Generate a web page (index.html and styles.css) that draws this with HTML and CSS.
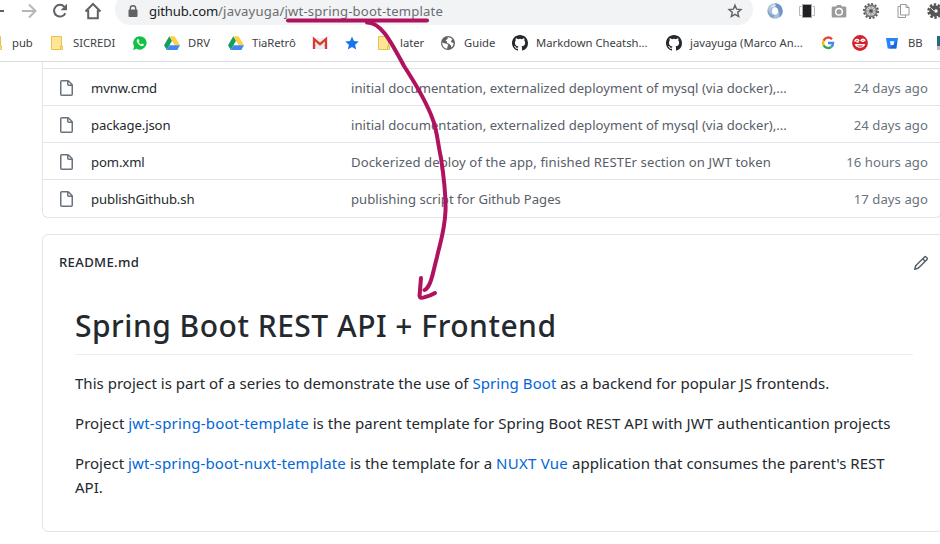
FILE: index.html
```
<!DOCTYPE html>
<html lang="en">
<head>
<meta charset="utf-8">
<title>javayuga/jwt-spring-boot-template</title>
<link rel="stylesheet" href="styles.css">
</head>
<body>
<svg width="0" height="0" class="defs">
  <symbol id="folder" viewBox="0 0 16 16"><path d="M2.5 1.5h10v10h1v3h-11z" fill="#ffe596" stroke="#e8c34b"/><path d="M11.5 14v-3h2" fill="none" stroke="#e8c34b"/></symbol>
  <symbol id="drive" viewBox="0 0 16 16"><path d="M5.3 1.2 0 10.3 2.7 15 8 5.8z" fill="#11a05f"/><path d="M5.3 1.2h5.3L16 10.3h-5.4z" fill="#ffcf45"/><path d="M5.4 10.3H16L13.3 15H2.7z" fill="#4285f4"/></symbol>
  <symbol id="github" viewBox="0 0 16 16"><path fill="#24292e" d="M8 0C3.58 0 0 3.58 0 8c0 3.54 2.29 6.53 5.47 7.59.4.07.55-.17.55-.38 0-.19-.01-.82-.01-1.49-2.01.37-2.53-.49-2.69-.94-.09-.23-.48-.94-.82-1.13-.28-.15-.68-.52-.01-.53.63-.01 1.08.58 1.23.82.72 1.21 1.87.87 2.33.66.07-.52.28-.87.51-1.07-1.78-.2-3.64-.89-3.64-3.95 0-.87.31-1.59.82-2.15-.08-.2-.36-1.02.08-2.12 0 0 .67-.21 2.2.82a7.6 7.6 0 0 1 4 0c1.53-1.04 2.2-.82 2.2-.82.44 1.1.16 1.92.08 2.12.51.56.82 1.27.82 2.15 0 3.07-1.87 3.75-3.65 3.95.29.25.54.73.54 1.48 0 1.07-.01 1.93-.01 2.2 0 .21.15.46.55.38A8.01 8.01 0 0 0 16 8c0-4.42-3.58-8-8-8z"/></symbol>
  <symbol id="file" viewBox="0 0 16 16"><path fill="#6a737d" fill-rule="evenodd" d="M3.75 1.5a.25.25 0 0 0-.25.25v12.5c0 .14.11.25.25.25h9.5a.25.25 0 0 0 .25-.25V6H10.75A1.75 1.75 0 0 1 9 4.25V1.5H3.75zm6.75.56v2.190c0 .14.11.25.25.25h2.190L10.5 2.060zM2 1.75C2 .78 2.780 0 3.75 0h6.09c.46 0 .91.18 1.24.51l3.41 3.41c.33.33.51.78.51 1.240v9.09A1.75 1.75 0 0 1 13.25 16h-9.5A1.75 1.75 0 0 1 2 14.250V1.750z"/></symbol>
</svg>

<header class="browser">
  <div class="toolbar">
    <svg class="icon back" viewBox="0 0 18 18"><path d="M0 10h18" stroke="#5f6368" stroke-width="2"/></svg>
    <svg class="icon forward" viewBox="0 0 16 16"><path d="M1 8h13M8 1.500 14.500 8 8 14.500" fill="none" stroke="#b4b6b9" stroke-width="2"/></svg>
    <svg class="icon reload" viewBox="0 0 16 16"><path d="M13.300 10.200A5.900 5.900 0 1 1 12.400 3.800" fill="none" stroke="#5f6368" stroke-width="2"/><path d="M15 .8v6.400H8.600z" fill="#5f6368"/></svg>
    <svg class="icon home" viewBox="0 0 18 18"><path d="M1.500 9.500 9 2l7.500 7.500M4.200 8v8.300h9.600V8" fill="none" stroke="#5f6368" stroke-width="2"/></svg>
    <div class="address">
      <svg class="lock" viewBox="0 0 10 13"><path d="M2.300 5V3.500a2.700 2.700 0 0 1 5.400 0V5" fill="none" stroke="#5f6368" stroke-width="1.400"/><rect x=".5" y="4.500" width="9" height="7.500" rx="1" fill="#5f6368"/></svg>
      <span class="url"><span class="host">github.com</span>/javayuga/jwt-spring-boot-template</span>
      <svg class="star" viewBox="0 0 16 16"><path d="m8 2.200 1.650 4 4.300.35-3.280 2.800 1 4.200L8 11.300l-3.670 2.250 1-4.200-3.280-2.800 4.300-.35z" fill="none" stroke="#5f6368" stroke-width="1.400"/></svg>
    </div>
    <div class="extensions">
      <svg viewBox="0 0 16 16"><circle cx="8" cy="8" r="7.700" fill="#a9bfd9"/><path d="M8 .3a7.700 7.700 0 0 1 4 14.200c1-3 1-8-4-10.500z" fill="#6c94c4"/><path d="M1 6c1 4 3 6 7 6l-2 3A7.500 7.500 0 0 1 1 6z" fill="#7fa3cf"/><ellipse cx="8" cy="8" rx="3" ry="3.800" fill="#fff"/><path d="M8 4c-3-1-5 .500-5.500 4C3 3 5 1 9 1.500z" fill="#dce7f3"/></svg>
      <svg viewBox="0 0 16 16"><path d="M2.500 3.500h-2v9h2M13.500 3.500h2v9h-2" fill="none" stroke="#b8b8b8"/><rect x="3" y="1" width="10" height="14" fill="#aaa"/><rect x="4" y="2" width="8" height="12" fill="#202124"/></svg>
      <svg viewBox="0 0 16 16"><path d="M5 3.500 6 2h4l1 1.500h3A1.300 1.300 0 0 1 15.300 5v8.200A1.300 1.300 0 0 1 14 14.500H2A1.300 1.300 0 0 1 .7 13.200V5A1.300 1.300 0 0 1 2 3.500z" fill="#9b9b9b"/><circle cx="8" cy="8.800" r="3.300" fill="none" stroke="#fff" stroke-width="1.500"/></svg>
      <svg viewBox="0 0 16 16"><circle cx="8" cy="8" r="7" fill="none" stroke="#555" stroke-width="2" stroke-dasharray="2 1.660"/><circle cx="8" cy="8" r="6.500" fill="#777"/><circle cx="8" cy="8" r="4.800" fill="#ccc"/><path d="M8 3v10M3 8h10M4.500 4.500l7 7M11.500 4.500l-7 7" stroke="#888" stroke-width=".8"/><circle cx="8" cy="8" r="1.800" fill="#555"/></svg>
      <svg viewBox="0 0 16 16"><path d="M5.500 3.500H3v11h7.500V12" fill="none" stroke="#999"/><path d="M5.500 1.500h5.500l3 3V12H5.500z" fill="#fff" stroke="#999"/><path d="M11 1.500v3h3" fill="none" stroke="#999"/></svg>
      <svg viewBox="0 0 16 16"><circle cx="8" cy="8" r="6.500" fill="none" stroke="#555" stroke-width="2.500" stroke-dasharray="2.500 1.580"/><circle cx="8" cy="8" r="5.800" fill="#555"/><circle cx="9" cy="8" r="1.700" fill="#fff"/><path d="m4 5 3 3" stroke="#ddd"/></svg>
    </div>
  </div>

  <nav class="bookmarks">
    <a><svg><use href="#folder"/></svg><span>pub</span></a>
    <a><svg><use href="#folder"/></svg><span>SICREDI</span></a>
    <a><svg viewBox="0 0 16 16"><path d="M8 1.200a6.700 6.700 0 1 1-3.300 12.600L1 15l1.200-3.600A6.700 6.700 0 0 1 8 1.200z" fill="#0fc144"/><path d="M5.500 4.200c-1 .7-1.100 2 .2 3.900s3.200 3.300 4.800 3c1.100-.3 1.500-1.200 1.300-1.800L10 8.400l-1 1c-1-.4-1.900-1.200-2.300-2.200l.8-1-.8-2z" fill="#fff"/></svg></a>
    <a><svg><use href="#drive"/></svg><span>DRV</span></a>
    <a><svg><use href="#drive"/></svg><span class="snug">TiaRetrô</span></a>
    <a><svg viewBox="0 0 16 16"><path d="M1 3h14v11H1z" fill="#eceff1"/><path d="m2 13 4-5m8 5-4-5" stroke="#ccc" fill="none"/><path d="M2 14V4l6 5.200L14 4v10" fill="none" stroke="#d93a2f" stroke-width="2.300"/></svg></a>
    <a><svg viewBox="0 0 16 16"><path d="m8 1.500 1.900 4.600 4.900.4-3.700 3.200 1.100 4.800L8 12l-4.200 2.500 1.100-4.800-3.700-3.200 4.900-.4z" fill="#1a73e8"/></svg></a>
    <a><svg><use href="#folder"/></svg><span>later</span></a>
    <a><svg viewBox="0 0 16 16"><circle cx="8" cy="8" r="7" fill="#5f6368"/><path d="M2.300 7.500 5 8.500l2 .2 1.300 1.500-.8 1.300-.3 2.200C4 13.500 2 10.500 2.300 7.500zM7 6.500l-1.500-1L7.500 4l.3-1.800c2 0 3.500.8 4.600 2.400L11 6l.6 1.500 2 .5c0 1.800-.9 3.500-2.300 4.500L11 10.600 9 8.800 7 8z" fill="#fff"/></svg><span>Guide</span></a>
    <a><svg><use href="#github"/></svg><span>Markdown Cheatsh...</span></a>
    <a><svg><use href="#github"/></svg><span>javayuga (Marco An...</span></a>
    <a><svg viewBox="0 0 16 16"><g fill="none" stroke-width="2.400"><path d="M12 4.200A5 5 0 0 0 3.600 5.700" stroke="#ea4335"/><path d="M3.600 5.700a5 5 0 0 0 0 4.600" stroke="#fbbc05"/><path d="M3.600 10.300A5 5 0 0 0 11.300 11.800" stroke="#34a853"/><path d="M11.300 11.800C12.600 10.800 13 9.500 13 8H8" stroke="#4285f4"/></g></svg></a>
    <a><svg viewBox="0 0 16 16"><circle cx="8" cy="8" r="7.900" fill="#d2222d"/><g fill="none" stroke="#fff" stroke-width="1.500"><path d="M3 6.800c0-3 3.300-3 4-.8M8.800 6c.7-2.300 4-2.300 4 .3M4.300 6.800h2.500M9.500 6.300h2.500"/></g><path d="M2.800 9h10.400c-.7 5-9.700 5-10.400 0z" fill="#fff"/><path d="M4.800 10.500h6.400c-1 1.600-5.400 1.600-6.400 0z" fill="#d2222d"/></svg></a>
    <a><svg viewBox="0 0 16 16"><path d="M2 3h12l-1.600 10.500H3.700z" fill="#2684ff"/><path d="m8 11 5-5-.8 7.500H5z" fill="#1b66d6"/><path d="M6 6.300h4.200l-.7 3.800H6.700z" fill="#fff"/></svg><span>BB</span></a>
    <a><svg viewBox="0 0 16 16"><path d="M1 1h14v14H1z" fill="#276a88"/><path d="M1 11h14v4H1z" fill="#bbb"/></svg></a>
  </nav>
</header>

<main>
  <section class="files">
    <div class="row"><svg><use href="#file"/></svg><span class="name">mvnw.cmd</span><span class="message">initial documentation, externalized deployment of mysql (via docker),...</span><time>24 days ago</time></div>
    <div class="row"><svg><use href="#file"/></svg><span class="name">package.json</span><span class="message">initial documentation, externalized deployment of mysql (via docker),...</span><time>24 days ago</time></div>
    <div class="row"><svg><use href="#file"/></svg><span class="name">pom.xml</span><span class="message deploy">Dockerized deploy of the app, finished RESTEr section on JWT token</span><time>16 hours ago</time></div>
    <div class="row"><svg><use href="#file"/></svg><span class="name">publishGithub.sh</span><span class="message">publishing script for Github Pages</span><time>17 days ago</time></div>
  </section>

  <article class="readme">
    <div class="readme-bar">
      <h2>README.md</h2>
      <svg viewBox="0 0 16 16"><path fill="#586069" fill-rule="evenodd" d="M11.013 1.427a1.75 1.75 0 012.474 0l1.086 1.086a1.75 1.75 0 010 2.474l-8.610 8.610c-.21.21-.47.364-.756.445l-3.251.93a.75.75 0 01-.927-.928l.929-3.250a1.750 1.750 0 01.445-.758l8.610-8.610zm1.414 1.060a.25.25 0 00-.354 0L10.811 3.750l1.439 1.440 1.263-1.263a.25.25 0 000-.354l-1.086-1.086zM11.189 6.250L9.750 4.810l-6.286 6.287a.25.25 0 00-.064.108l-.558 1.953 1.953-.558a.249.249 0 00.108-.064l6.286-6.286z"/></svg>
    </div>
    <div class="markdown">
      <h1>Spring Boot REST API + Frontend</h1>
      <p>This project is part of a series to demonstrate the use of <a>Spring Boot</a> as a backend for popular JS frontends.</p>
      <p class="parent">Project <a class="repo">jwt-spring-boot-template</a> is the parent template for Spring Boot REST API with JWT authenticantion projects</p>
      <p>Project <a class="repo">jwt-spring-boot-nuxt-template</a> is the template for a <a class="nuxt">NUXT Vue</a> application that consumes the parent's REST API.</p>
    </div>
  </article>
</main>

<svg class="annotation" viewBox="0 0 940 544"><g fill="none" stroke="#b0125f" stroke-width="4" stroke-linecap="round" stroke-linejoin="round"><path d="M288 20.500H427"/><path d="M367 22.500C380 22 389 38 404 66C417 86 427 103 433 120C437 130 438 145 441 158C444 178 446 195 445.500 211C444.500 232 440 243 437 257C433 272 432 280 429 285Q427 289 424.500 290"/><path d="M421 278Q420 290 419.500 296Q420 299 425 297Q430 296 435 293"/></g></svg>
</body>
</html>
```
FILE: styles.css
```
* { box-sizing: border-box; }
body {
  margin: 0;
  width: 940px;
  height: 544px;
  overflow: hidden;
  background: #fff;
  color: #24292e;
  font-family: "Noto Sans", "Open Sans", sans-serif;
}
.defs { position: absolute; }
svg { display: block; flex: none; }

.browser {
  height: 62px;
  border-bottom: 1px solid #dadce0;
}
.toolbar {
  display: flex;
  height: 25px;
}
.icon { width: 16px; height: 16px; margin-top: 3px; }
.back { width: 18px; height: 18px; margin: 1px 0 0 -14px; }
.forward { margin-left: 17px; }
.reload { margin-left: 15px; }
.home { width: 18px; height: 18px; margin: 2px 0 0 16px; }
.address {
  display: flex;
  flex: none;
  width: 638px;
  height: 31px;
  margin: -6px 0 0 13px;
  padding: 8px 10px 0 13px;
  border-radius: 15.5px;
  background: #f1f3f4;
}
.lock { width: 10px; height: 13px; margin: 3px 11px 0 0; }
.url {
  color: #6a6e73;
  font-size: 13.125px;
  line-height: 19px;
  letter-spacing: .175px;
}
.host { color: #202124; letter-spacing: -.14px; }
.star { width: 16px; height: 16px; margin: 1px 0 0 auto; }
.extensions {
  display: flex;
  gap: 16px;
  margin: 3px 0 0 14px;
}
.extensions svg { width: 16px; height: 16px; }

.bookmarks {
  display: grid;
  grid-template-columns: 61px 83px 32px 64px 84px 32px 32px 64px 72px 154px 154px 32px 32px 52px 16px;
  margin-left: -12px;
  height: 36px;
}
.bookmarks a {
  display: flex;
  align-items: center;
  gap: 8px;
  height: 35px;
  font-size: 11.25px;
  color: #3c4043;
  white-space: nowrap;
}
.bookmarks svg { width: 16px; height: 16px; }
.snug { letter-spacing: -.05px; }

.files {
  margin: 0 0 16px 42px;
  padding-top: 6px;
  width: 900px;
  height: 156px;
  border: 1px solid #e1e4e8;
  border-top: 0;
  border-radius: 0 0 6px 6px;
}
.row {
  display: grid;
  grid-template-columns: 32px 260px 470px 1fr;
  align-items: center;
  height: 37px;
  padding: 2px 13px 0 16px;
  border-top: 1px solid #e1e4e8;
  font-size: 13.125px;
}
.row svg { width: 16px; height: 16px; margin-left: -1px; }
.name { letter-spacing: -.11px; }
.message { color: #586069; letter-spacing: .01px; }
.deploy { letter-spacing: .094px; }
.row time {
  color: #6a737d;
  text-align: right;
  letter-spacing: .07px;
}

.readme {
  width: 902px;
  height: 298px;
  margin-left: 42px;
  border: 1px solid #e1e4e8;
  border-radius: 6px;
}
.readme-bar {
  display: flex;
  align-items: center;
  justify-content: space-between;
  height: 55px;
  padding: 0 14px 0 16px;
}
.readme-bar h2 {
  margin: -2px 0 0;
  font-size: 13.125px;
  font-weight: 500;
  letter-spacing: .33px;
}
.readme-bar svg { width: 16px; height: 16px; }
.markdown {
  width: 838px;
  margin: 16px 0 0 32px;
  font-size: 15px;
  line-height: 24px;
  letter-spacing: .015px;
}
.markdown h1 {
  margin: 0 0 16px;
  height: 49px;
  border-bottom: 1px solid #eaecef;
  font-size: 30px;
  font-weight: 500;
  line-height: 40px;
  letter-spacing: .5px;
}
.markdown p { margin: 0 0 16px; }
.markdown .parent { letter-spacing: .05px; }
.markdown a { color: #0366d6; letter-spacing: .07px; }
.markdown .repo { letter-spacing: .16px; }
.markdown .nuxt { letter-spacing: .25px; }

.annotation {
  position: absolute;
  top: 0;
  left: 0;
  width: 940px;
  height: 544px;
  pointer-events: none;
}
```
